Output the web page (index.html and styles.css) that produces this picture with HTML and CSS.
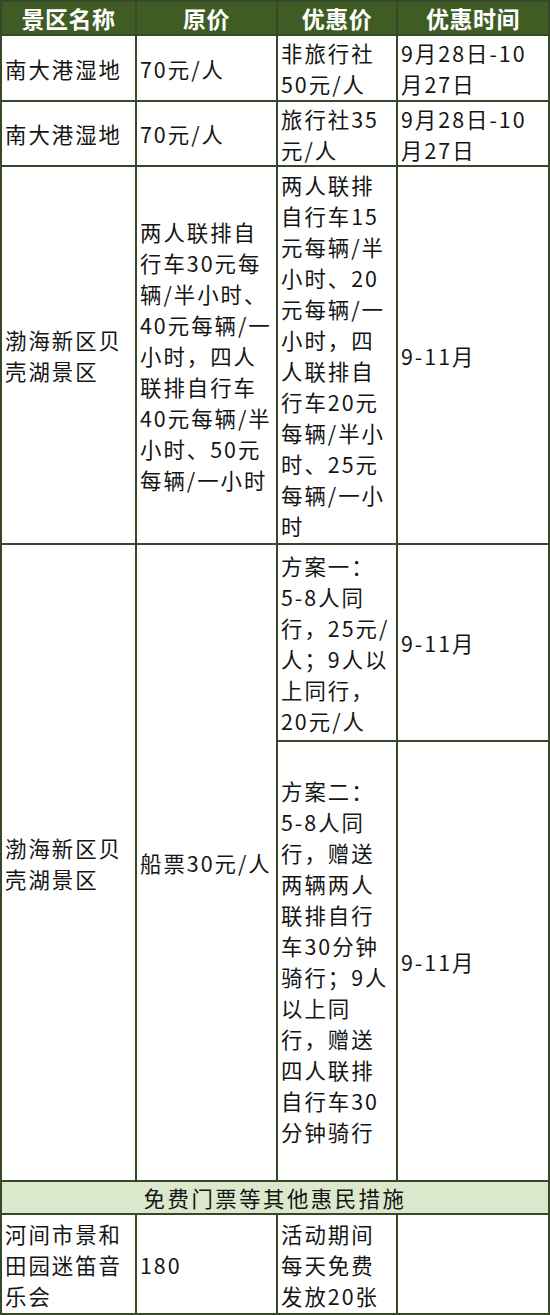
FILE: index.html
```html
<!DOCTYPE html>
<html lang="zh-CN">
<head>
<meta charset="utf-8">
<title>景区优惠</title>
<link rel="stylesheet" href="styles.css">
</head>
<body>
<table class="price-table">
  <colgroup>
    <col class="c1"><col class="c2"><col class="c3"><col class="c4">
  </colgroup>
  <thead>
    <tr class="r-head">
      <th>景区名称</th><th>原价</th><th>优惠价</th><th>优惠时间</th>
    </tr>
  </thead>
  <tbody>
    <tr class="r1">
      <td>南大港湿地</td>
      <td>70元/人</td>
      <td>非旅行社<br>50元/人</td>
      <td>9月28日-10<br>月27日</td>
    </tr>
    <tr class="r2">
      <td>南大港湿地</td>
      <td>70元/人</td>
      <td>旅行社35<br>元/人</td>
      <td>9月28日-10<br>月27日</td>
    </tr>
    <tr class="r3">
      <td>渤海新区贝<br>壳湖景区</td>
      <td>两人联排自<br>行车30元每<br>辆/半小时、<br>40元每辆/一<br>小时，四人<br>联排自行车<br>40元每辆/半<br>小时、50元<br>每辆/一小时</td>
      <td>两人联排<br>自行车15<br>元每辆/半<br>小时、20<br>元每辆/一<br>小时，四<br>人联排自<br>行车20元<br>每辆/半小<br>时、25元<br>每辆/一小<br>时</td>
      <td>9-11月</td>
    </tr>
    <tr class="r4a">
      <td rowspan="2">渤海新区贝<br>壳湖景区</td>
      <td rowspan="2">船票30元/人</td>
      <td>方案一：<br>5-8人同<br>行，25元/<br>人；9人以<br>上同行，<br>20元/人</td>
      <td>9-11月</td>
    </tr>
    <tr class="r4b">
      <td>方案二：<br>5-8人同<br>行，赠送<br>两辆两人<br>联排自行<br>车30分钟<br>骑行；9人<br>以上同<br>行，赠送<br>四人联排<br>自行车30<br>分钟骑行</td>
      <td>9-11月</td>
    </tr>
    <tr class="r-section">
      <td colspan="4">免费门票等其他惠民措施</td>
    </tr>
    <tr class="r5">
      <td>河间市景和<br>田园迷笛音<br>乐会</td>
      <td>180</td>
      <td>活动期间<br>每天免费<br>发放20张</td>
      <td></td>
    </tr>
  </tbody>
</table>
</body>
</html>
```

FILE: styles.css
```css
html, body {
  margin: 0;
  padding: 0;
  background: #ffffff;
}

body {
  font-family: "Noto Sans CJK SC", "Noto Sans", sans-serif;
  color: #151515;
}

.price-table {
  width: 548px;
  border-collapse: collapse;
  table-layout: fixed;
  font-size: 21.4px;
  line-height: 31px;
  letter-spacing: 2px;
}

.c1 { width: 135px; }
.c2 { width: 141px; }
.c3 { width: 120px; }
.c4 { width: 152px; }

.price-table th,
.price-table td {
  border: 2px solid #36472a;
  padding: 0 0 0 3px;
  vertical-align: middle;
  text-align: left;
  white-space: nowrap;
  overflow: hidden;
}

.price-table th {
  background: #3f5c24;
  color: #ffffff;
  font-weight: 700;
  text-align: center;
  font-size: 23px;
  letter-spacing: 0.5px;
  padding: 0;
}

.r-head th { height: 32px; }
.r1 td { height: 64px; }
.r2 td { height: 63px; }
.r3 td { height: 376px; }
.r4a td { height: 195px; }
.r4b td { height: 438px; }
.r-section td {
  height: 31px;
  background: #dbe8cc;
  text-align: center;
  padding: 0;
  letter-spacing: 2.5px;
}
.r5 td { height: 98px; }
```
